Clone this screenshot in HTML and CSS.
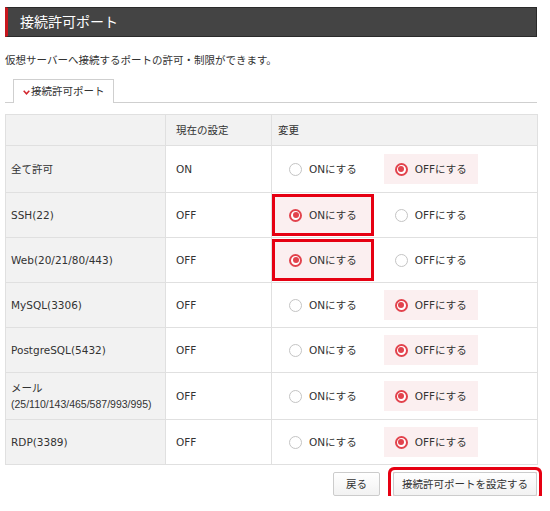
FILE: index.html
```html
<!DOCTYPE html>
<html lang="ja">
<head>
<meta charset="utf-8">
<title>接続許可ポート</title>
<link rel="stylesheet" href="styles.css">
</head>
<body>
<div class="page">
  <h1 class="title">接続許可ポート</h1>
  <p class="desc">仮想サーバーへ接続するポートの許可・制限ができます。</p>
  <div class="tabs">
    <div class="tab"><svg class="chev" width="7" height="5" viewBox="0 0 7 5"><polyline points="0.7,0.8 3.5,3.8 6.3,0.8" fill="none" stroke="#d2252d" stroke-width="1.5"/></svg>接続許可ポート</div>
  </div>
  <table class="ports">
    <colgroup><col class="c1"><col class="c2"><col class="c3"></colgroup>
    <thead>
      <tr><th class="name"></th><th class="cur">現在の設定</th><th class="chg">変更</th></tr>
    </thead>
    <tbody>
      <tr class="first"><td class="name">全て許可</td><td class="cur">ON</td><td class="chg"><div class="opts"><span class="opt"><span class="radio"></span>ONにする</span><span class="opt sel"><span class="radio"></span>OFFにする</span></div></td></tr>
      <tr><td class="name">SSH(22)</td><td class="cur">OFF</td><td class="chg"><div class="opts"><span class="opt sel mark"><span class="radio"></span>ONにする</span><span class="opt"><span class="radio"></span>OFFにする</span></div></td></tr>
      <tr><td class="name">Web(20/21/80/443)</td><td class="cur">OFF</td><td class="chg"><div class="opts"><span class="opt sel mark"><span class="radio"></span>ONにする</span><span class="opt"><span class="radio"></span>OFFにする</span></div></td></tr>
      <tr><td class="name">MySQL(3306)</td><td class="cur">OFF</td><td class="chg"><div class="opts"><span class="opt"><span class="radio"></span>ONにする</span><span class="opt sel"><span class="radio"></span>OFFにする</span></div></td></tr>
      <tr><td class="name">PostgreSQL(5432)</td><td class="cur">OFF</td><td class="chg"><div class="opts"><span class="opt"><span class="radio"></span>ONにする</span><span class="opt sel"><span class="radio"></span>OFFにする</span></div></td></tr>
      <tr class="tall"><td class="name">メール<br><span class="ports-list">(25/110/143/465/587/993/995)</span></td><td class="cur">OFF</td><td class="chg"><div class="opts"><span class="opt"><span class="radio"></span>ONにする</span><span class="opt sel"><span class="radio"></span>OFFにする</span></div></td></tr>
      <tr><td class="name">RDP(3389)</td><td class="cur">OFF</td><td class="chg"><div class="opts"><span class="opt"><span class="radio"></span>ONにする</span><span class="opt sel"><span class="radio"></span>OFFにする</span></div></td></tr>
    </tbody>
  </table>
  <div class="actions">
    <button class="btn">戻る</button>
    <button class="btn primary mark-btn">接続許可ポートを設定する</button>
  </div>
</div>
</body>
</html>
```
FILE: styles.css
```css
html, body {
  margin: 0;
  padding: 0;
  background: #fff;
}
body {
  font-family: "DejaVu Sans", "Noto Sans CJK JP", sans-serif;
  font-size: 10.5px;
  color: #333;
}
.page {
  width: 532px;
  padding: 7px 13px 0 5px;
}
.title {
  margin: 0;
  height: 30px;
  box-sizing: border-box;
  background: #444;
  border: 1px solid #2a2a2a;
  border-left: 3px solid #c8161d;
  color: #fff;
  font-size: 14px;
  font-weight: normal;
  line-height: 28px;
  padding-left: 12px;
}
.desc {
  margin: 16px 0 0;
  line-height: 14px;
}
.tabs {
  margin-top: 12px;
  display: flex;
  padding-left: 8px;
  border-bottom: 1px solid #cfcfcf;
}
.tab {
  height: 24px;
  box-sizing: border-box;
  border: 1px solid #cfcfcf;
  border-bottom: none;
  margin-bottom: -1px;
  background: #fff;
  padding: 0 8px 0 9px;
  line-height: 25px;
  display: flex;
  align-items: center;
}
.chev {
  margin-right: 1px;
  margin-top: 1px;
}
.ports {
  margin-top: 11px;
  width: 532px;
  border-collapse: collapse;
  table-layout: fixed;
}
.c1 { width: 160px; }
.c2 { width: 106px; }
.c3 { width: 266px; }
.ports th,
.ports td {
  border: 1px solid #e0e0e0;
  text-align: left;
  font-weight: normal;
  line-height: 16px;
  vertical-align: middle;
  padding: 0;
}
.ports thead tr { height: 31px; }
.ports thead th { background: #f2f2f2; }
.ports tbody tr { height: 45px; }
.ports tbody tr.first { height: 47px; }
.ports tbody tr.tall { height: 47px; }
.ports td.name { background: #f2f2f2; padding-left: 5px; }
.ports-list {
  font-family: "Liberation Sans", "Noto Sans CJK JP", sans-serif;
  font-size: 10.5px;
}
.ports .cur { padding-left: 10px; }
.ports th.chg { padding-left: 6px; }
.ports td.chg { padding-left: 6px; }
.opts {
  display: flex;
  gap: 16px;
}
.opt {
  display: inline-flex;
  align-items: center;
  height: 30px;
  padding: 0 11px;
  gap: 7px;
  white-space: nowrap;
}
.radio {
  width: 13px;
  height: 13px;
  box-sizing: border-box;
  border: 1px solid #c4c4c4;
  border-radius: 50%;
  background: #fff;
  position: relative;
  flex: none;
}
.opt.sel {
  background: #fbeff0;
}
.opt.sel .radio {
  border: 2px solid #e2434d;
}
.opt.sel .radio::after {
  content: "";
  position: absolute;
  left: 1.5px;
  top: 1.5px;
  width: 6px;
  height: 6px;
  border-radius: 50%;
  background: #e2434d;
}
.opt.mark {
  box-shadow: 0 0 0 3px #fbeff0, 0 0 0 6px #e60012;
}
.actions {
  display: flex;
  justify-content: flex-end;
  gap: 13px;
  margin-top: 7px;
}
.btn {
  height: 24px;
  box-sizing: border-box;
  border: 1px solid #cccccc;
  border-radius: 2px;
  background: linear-gradient(#ffffff, #f2f2f2);
  font-family: inherit;
  font-size: 10.5px;
  color: #333;
  padding: 0 12px;
  line-height: 22px;
}
.btn.primary {
  padding: 0 8px;
}
.mark-btn {
  box-shadow: 0 0 0 2px #fff, 0 0 0 5px #e60012;
}
```
